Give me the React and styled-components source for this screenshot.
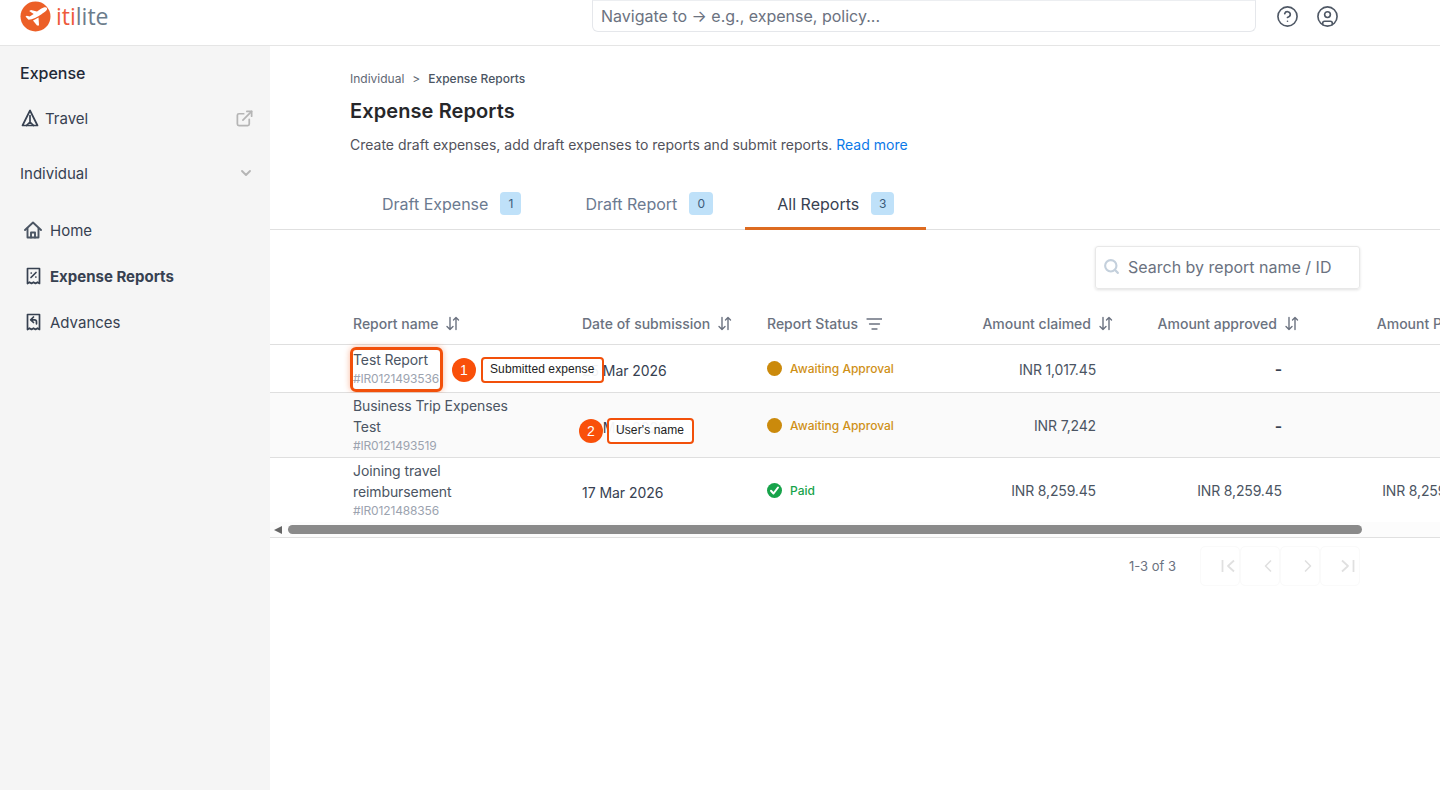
import React from 'react';
import styled, { createGlobalStyle } from 'styled-components';
import { ExternalLink, ChevronDown, CircleHelp, CircleUser, Search, ChevronLeft, ChevronRight } from 'lucide-react';

const GlobalStyle = createGlobalStyle`
  html, body { margin: 0; padding: 0; height: 100%; overflow: hidden; background: #fff; }
  body { font-family: Inter, "Liberation Sans", sans-serif; color: #374151; }
  * { box-sizing: border-box; }
`;

const Page = styled.div`
  width: 1440px;
  height: 790px;
  display: flex;
  flex-direction: column;
  overflow: hidden;
`;

const TopBar = styled.header`
  height: 46px;
  flex: none;
  display: flex;
  align-items: flex-start;
  border-bottom: 1px solid #e5e5e5;
  background: #fff;
`;

const LogoBox = styled.div`
  width: 592px;
  display: flex;
  align-items: center;
  gap: 5px;
  padding-left: 20px;
  height: 33px;
`;

const LogoText = styled.span`
  font-family: "Open Sans", sans-serif;
  font-size: 23px;
  line-height: 33px;
  color: #6b7c8c;
  b { font-weight: 400; color: #ee5a3a; }
`;

const NavSearch = styled.div`
  width: 664px;
  height: 32px;
  border: 1px solid #e5e7eb;
  border-top-color: #eceef1;
  border-radius: 0 0 6px 6px;
  padding: 0 8px;
  font-size: 16px;
  line-height: 31px;
  color: #6b7280;
`;

const TopIcons = styled.div`
  display: flex;
  gap: 17px;
  margin-left: 20px;
  padding-top: 5px;
  color: #4f5865;
`;

const Body = styled.div`
  flex: 1;
  display: flex;
  min-height: 0;
`;

const Sidebar = styled.aside`
  width: 270px;
  flex: none;
  background: #f5f5f5;
  padding: 16px 16px 0 20px;
`;

const SideTitle = styled.div`
  font-size: 16px;
  font-weight: 500;
  line-height: 22px;
  color: #1f2937;
`;

const SideRow = styled.div`
  display: flex;
  align-items: center;
  justify-content: space-between;
  height: 24px;
  font-size: 15px;
  color: #374151;
  margin-top: ${p => p.$top}px;
`;

const SideLabel = styled.span`
  display: flex;
  align-items: center;
  gap: 6px;
  padding-left: 1px;
`;

const NavList = styled.nav`
  display: flex;
  flex-direction: column;
  gap: 22px;
  margin-top: 33px;
  padding-left: 4px;
`;

const NavItem = styled.a`
  display: flex;
  align-items: center;
  gap: 8px;
  height: 24px;
  font-size: 15px;
  color: #374151;
  font-weight: ${p => (p.$active ? 700 : 400)};
`;

const IconSlot = styled.span`
  width: 18px;
  display: flex;
  justify-content: center;
`;

const Main = styled.main`
  flex: 1;
  min-width: 0;
  overflow: hidden;
`;

const Head = styled.div`
  padding: 25px 0 0 80px;
`;

const Crumbs = styled.div`
  display: flex;
  gap: 8px;
  font-size: 12px;
  line-height: 16px;
  color: #5f6874;
  span:last-child { color: #4b5563; font-weight: 500; }
`;

const Title = styled.h1`
  margin: 10px 0 0;
  font-size: 20px;
  line-height: 28px;
  font-weight: 600;
  letter-spacing: 0.1px;
  color: #27272a;
`;

const Desc = styled.p`
  margin: 10px 0 0;
  font-size: 14px;
  line-height: 20px;
  color: #52525b;
  a { color: #0b79e8; }
`;

const Tabs = styled.div`
  display: flex;
  height: 50px;
  margin-top: 25px;
  padding-left: 80px;
  border-bottom: 1px solid #e0e0e0;
`;

const Tab = styled.div`
  display: flex;
  align-items: center;
  gap: 12px;
  height: 50px;
  padding: 0 32px;
  font-size: 16px;
  color: ${p => (p.$active ? '#374151' : '#6b7a90')};
  border-bottom: 3px solid ${p => (p.$active ? '#dd6b20' : 'transparent')};
`;

const Count = styled.span`
  width: ${p => p.$w}px;
  height: 23px;
  border-radius: 4px;
  background: #bfe1f9;
  color: #3b5b7a;
  font-size: 12px;
  line-height: 24px;
  text-align: center;
`;

const SearchRow = styled.div`
  display: flex;
  justify-content: flex-end;
  padding: 16px 80px 0 0;
`;

const SearchBox = styled.div`
  width: 265px;
  height: 43px;
  display: flex;
  align-items: center;
  gap: 8px;
  padding: 0 0 2px 7px;
  border: 1px solid #e8e8e8;
  border-radius: 3px;
  box-shadow: 0 1px 3px rgba(0, 0, 0, 0.12);
  font-size: 16px;
  color: #6b7280;
`;

const TableWrap = styled.div`
  margin-top: 15px;
  overflow: hidden;
`;

const Row = styled.div`
  position: relative;
  display: grid;
  grid-template-columns: 229px 185px 193px 153px 186px 185px;
  padding-left: 83px;
  width: 1300px;
  height: ${p => p.$h}px;
  align-items: center;
  background: ${p => (p.$shade ? '#fafafa' : '#fff')};
  border-bottom: ${p => (p.$last ? 'none' : '1px solid #dfdfdf')};
`;

const HeadRow = styled(Row)`
  font-size: 14px;
  font-weight: 500;
  color: #6b7280;
  padding-bottom: 1px;
`;

const HeadCell = styled.div`
  display: flex;
  align-items: center;
  gap: 8px;
  white-space: nowrap;
  justify-content: ${p => (p.$right ? 'flex-end' : 'flex-start')};
`;

const NameCell = styled.div`
  font-size: 14px;
  line-height: 21px;
  letter-spacing: -0.1px;
  color: #4b5563;
  width: 165px;
  padding-bottom: 2px;
  small {
    display: block;
    font-size: 12px;
    line-height: 17px;
    letter-spacing: -0.15px;
    color: #9ca3af;
  }
`;

const DateCell = styled.div`
  font-size: 14px;
  color: #374151;
  padding-top: 4px;
  letter-spacing: -0.05px;
  white-space: nowrap;
`;

const Status = styled.div`
  display: flex;
  align-items: center;
  gap: 8px;
  font-size: 12px;
  font-weight: 500;
  color: ${p => p.$color};
`;

const Dot = styled.i`
  width: 15px;
  height: 15px;
  border-radius: 50%;
  background: #cb8a0c;
`;

const Amount = styled.div`
  font-size: 14px;
  letter-spacing: -0.15px;
  color: #4b5563;
  text-align: right;
  padding: 1px 17px 0 0;
  white-space: nowrap;
`;

const Dash = styled(Amount)`
  font-size: 16px;
  font-weight: 600;
  color: #374151;
`;

const Highlight = styled.div`
  position: absolute;
  left: 80px;
  top: 2px;
  width: 93px;
  height: 45px;
  border: 3px solid #f2500a;
  border-radius: 6px;
  box-shadow: 0 0 6px rgba(242, 80, 10, 0.4);
  pointer-events: none;
`;

const Marker = styled.div`
  position: absolute;
  left: ${p => p.$x}px;
  top: ${p => p.$y}px;
  width: 24px;
  height: 24px;
  border-radius: 50%;
  background: #f9500a;
  color: #fff;
  font-family: "Liberation Sans", sans-serif;
  font-size: 14px;
  line-height: 24px;
  text-align: center;
`;

const Callout = styled.div`
  position: absolute;
  left: ${p => p.$x}px;
  top: ${p => p.$y}px;
  height: 26px;
  padding: 0 8px 0 7px;
  border: 2px solid #f2500a;
  border-radius: 4px;
  background: rgba(255, 255, 255, 0.94);
  color: #222;
  font-family: "Liberation Sans", sans-serif;
  font-size: 12px;
  letter-spacing: 0.1px;
  line-height: 21px;
  white-space: nowrap;
`;

const ScrollTrack = styled.div`
  display: flex;
  align-items: center;
  height: 16px;
  padding-left: 4px;
  gap: 6px;
  background: #fcfcfc;
  border-bottom: 1px solid #e0e0e0;
`;

const ScrollArrow = styled.i`
  width: 0;
  height: 0;
  border-style: solid;
  border-width: 4px 8px 4px 0;
  border-color: transparent #666 transparent transparent;
`;

const ScrollThumb = styled.div`
  width: 1074px;
  height: 9px;
  border-radius: 5px;
  background: #8a8a8a;
`;

const Pager = styled.div`
  display: flex;
  align-items: center;
  padding: 8px 0 0 859px;
`;

const PageInfo = styled.span`
  width: 71px;
  font-size: 13px;
  color: #6b7280;
`;

const PageBtn = styled.div`
  width: 40px;
  height: 40px;
  display: flex;
  align-items: center;
  justify-content: center;
  padding-left: 16px;
  border: 1px solid #fafafa;
  border-radius: 5px;
  color: #e0e0e0;
`;

const SortIcon = () => (
  <svg width="14" height="15" viewBox="0 0 14 15" fill="none" stroke="#6b7280" strokeWidth="1.4" strokeLinecap="round" strokeLinejoin="round">
    <path d="M4 1.500v12M1 10.500l3 3 3-3" />
    <path d="M10 13.500v-12M7.500 4 10 1.500 12.500 4" />
  </svg>
);

const FilterIcon = () => (
  <svg width="16" height="16" viewBox="0 0 16 16" fill="none" stroke="#6b7280" strokeWidth="1.3" strokeLinecap="round">
    <path d="M1 3h15M3.500 8h10M6 13h5" />
  </svg>
);

const LogoMark = () => (
  <svg width="31" height="31" viewBox="0 0 31 31">
    <circle cx="15.500" cy="15.500" r="15" fill="#ec5f27" />
    <path d="M27 7c-1-1.500-4-.5-6 .8l-4 2.700-6-1.500-1.800 1 4.500 3-4 2.500-3-.8-1.200.8 3 3.200c4-.3 9-2.500 13-5.500 3.500-2.500 6.300-4.500 5.500-6Z" fill="#fff" />
    <path d="M13 19.500l4 5h2l-.5-8z" fill="#fff" />
  </svg>
);

const TravelIcon = () => (
  <svg width="18" height="18" viewBox="0 0 18 18" fill="none" stroke="#374151" strokeWidth="1.700" strokeLinejoin="round" strokeLinecap="round">
    <path d="M9 1.500 1.500 16.500h15L9 1.500Z" />
    <path d="M9 6.500v6.500L5.500 16.500M9 13l3.500 3.500" />
  </svg>
);

const HomeIcon = () => (
  <svg width="18" height="18" viewBox="0 0 18 18" fill="none" stroke="#4b5563" strokeWidth="1.900" strokeLinejoin="round" strokeLinecap="round">
    <path d="M1 9 9 1.500 17 9" />
    <path d="M3.500 7.500V16.500h11V7.500" />
    <path d="M7 16.500V11.500h4v5" />
  </svg>
);

const ReceiptIcon = ({ children }) => (
  <svg width="15" height="18" viewBox="0 0 15 18" fill="none" stroke="#374151" strokeWidth="1.700" strokeLinejoin="round" strokeLinecap="round">
    <path d="M1.500 1.500h12v15l-2-1.300-2 1.300-2-1.300-2 1.300-2-1.300-2 1.300v-15Z" />
    {children}
  </svg>
);

const CheckDot = () => (
  <svg width="15" height="15" viewBox="0 0 15 15">
    <circle cx="7.500" cy="7.500" r="7.500" fill="#17a34a" />
    <path d="M4 7.800 6.500 10.500 11 4.500" fill="none" stroke="#fff" strokeWidth="2" strokeLinecap="round" strokeLinejoin="round" />
  </svg>
);

const EdgeChevron = ({ flip }) => (
  <svg width="14" height="14" viewBox="0 0 14 14" fill="none" stroke="#e0e0e0" strokeWidth="1.800" strokeLinejoin="round">
    {flip ? <path d="M1 1.500 7 7l-6 5.500M12.500 1v12" /> : <path d="M13 1.500 7 7l6 5.500M1.500 1v12" />}
  </svg>
);

export default function App() {
  return (
    <Page>
      <GlobalStyle />
      <TopBar>
        <LogoBox>
          <LogoMark />
          <LogoText><b>iti</b>lite</LogoText>
        </LogoBox>
        <NavSearch>Navigate to → e.g., expense, policy...</NavSearch>
        <TopIcons>
          <CircleHelp size={23} strokeWidth={1.7} />
          <CircleUser size={23} strokeWidth={1.7} />
        </TopIcons>
      </TopBar>
      <Body>
        <Sidebar>
          <SideTitle>Expense</SideTitle>
          <SideRow $top={22}>
            <SideLabel><TravelIcon />Travel</SideLabel>
            <ExternalLink size={19} color="#b5b5b5" strokeWidth={2.2} />
          </SideRow>
          <SideRow $top={31}>
            <span>Individual</span>
            <ChevronDown size={16} color="#b5b5b5" strokeWidth={2.8} />
          </SideRow>
          <NavList>
            <NavItem><IconSlot><HomeIcon /></IconSlot>Home</NavItem>
            <NavItem $active>
              <IconSlot>
                <ReceiptIcon><path d="M5 10.500l5-5M5.200 6h.1M9.800 10h.1" /></ReceiptIcon>
              </IconSlot>
              Expense Reports
            </NavItem>
            <NavItem>
              <IconSlot>
                <ReceiptIcon><path d="M7.500 4 4.700 6.800 7.500 9.500M5 6.800h3.500a2 2 0 0 1 2 2v2" /></ReceiptIcon>
              </IconSlot>
              Advances
            </NavItem>
          </NavList>
        </Sidebar>
        <Main>
          <Head>
            <Crumbs><span>Individual</span><span>&gt;</span><span>Expense Reports</span></Crumbs>
            <Title>Expense Reports</Title>
            <Desc>Create draft expenses, add draft expenses to reports and submit reports. <a>Read more</a></Desc>
          </Head>
          <Tabs>
            <Tab>Draft Expense<Count $w={21}>1</Count></Tab>
            <Tab>Draft Report<Count $w={24}>0</Count></Tab>
            <Tab $active>All Reports<Count $w={23}>3</Count></Tab>
          </Tabs>
          <SearchRow>
            <SearchBox><Search size={17} color="#c4d0dc" strokeWidth={3} />Search by report name / ID</SearchBox>
          </SearchRow>
          <TableWrap>
            <HeadRow $h={41}>
              <HeadCell>Report name <SortIcon /></HeadCell>
              <HeadCell>Date of submission <SortIcon /></HeadCell>
              <HeadCell>Report Status <FilterIcon /></HeadCell>
              <HeadCell $right>Amount claimed <SortIcon /></HeadCell>
              <HeadCell $right>Amount approved <SortIcon /></HeadCell>
              <HeadCell $right>Amount Paid <SortIcon /></HeadCell>
            </HeadRow>
            <Row $h={48}>
              <NameCell>Test Report<small>#IR0121493536</small></NameCell>
              <DateCell>25 Mar 2026</DateCell>
              <Status $color="#cf9016"><Dot />Awaiting Approval</Status>
              <Amount>INR 1,017.45</Amount>
              <Dash>-</Dash>
              <Amount />
              <Highlight />
              <Marker $x={182} $y={13}>1</Marker>
              <Callout $x={211} $y={12}>Submitted expense</Callout>
            </Row>
            <Row $h={65} $shade>
              <NameCell>Business Trip Expenses Test<small>#IR0121493519</small></NameCell>
              <DateCell>25 Mar 2026</DateCell>
              <Status $color="#cf9016"><Dot />Awaiting Approval</Status>
              <Amount>INR 7,242</Amount>
              <Dash>-</Dash>
              <Amount />
              <Marker $x={309} $y={26}>2</Marker>
              <Callout $x={337} $y={25}>User's name</Callout>
            </Row>
            <Row $h={64} $last>
              <NameCell>Joining travel reimbursement<small>#IR0121488356</small></NameCell>
              <DateCell>17 Mar 2026</DateCell>
              <Status $color="#17a34a"><CheckDot />Paid</Status>
              <Amount>INR 8,259.45</Amount>
              <Amount>INR 8,259.45</Amount>
              <Amount>INR 8,259.45</Amount>
            </Row>
          </TableWrap>
          <ScrollTrack><ScrollArrow /><ScrollThumb /></ScrollTrack>
          <Pager>
            <PageInfo>1-3 of 3</PageInfo>
            <PageBtn><EdgeChevron /></PageBtn>
            <PageBtn><ChevronLeft size={20} /></PageBtn>
            <PageBtn><ChevronRight size={20} /></PageBtn>
            <PageBtn><EdgeChevron flip /></PageBtn>
          </Pager>
        </Main>
      </Body>
    </Page>
  );
}
